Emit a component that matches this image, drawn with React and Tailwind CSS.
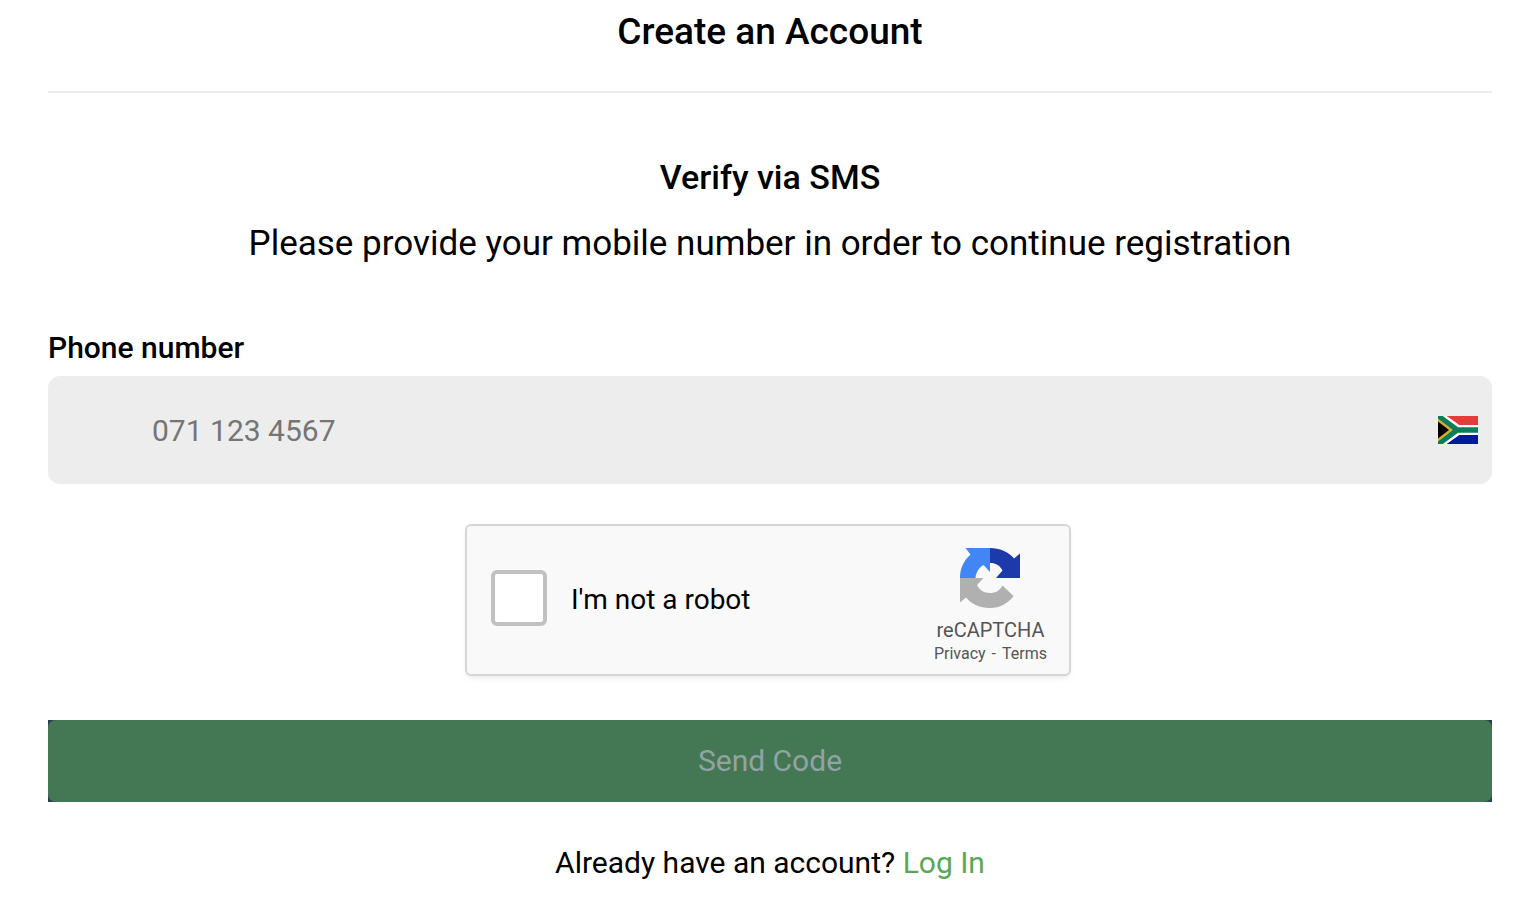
import React, { useState } from "react";

const SouthAfricaFlag = () => (
  <svg viewBox="0 0 40 28" className="h-7 w-10" role="img" aria-label="South Africa">
    <path fill="#fff" d="M0 0h40v28H0z" />
    <path fill="#e23d38" d="M8 0h32v9.3H21.5z" />
    <path fill="#001b9a" d="M8 28h32v-9.3H21.5z" />
    <path fill="#fff" d="M2 0h6.6l12.4 9H40v10H21L8.6 28H2z" />
    <path fill="#0a7d5b" d="M0 0h4.8l15.2 11.3H40v5.4H20L4.8 28H0z" />
    <path fill="#d9ae35" d="M0 2.5 15 14 0 25.5z" />
    <path fill="#000" d="M0 5.5 11 14 0 22.5z" />
  </svg>
);

const RecaptchaLogo = () => (
  <svg viewBox="0 0 60 60" className="size-15" aria-hidden="true">
    <path
      fill="#1c3aa9"
      d="M30 0C39.5 0 48.5 3.6 54 10.5L60 5.5V30H36L42.5 22.5C41.5 20.5 40 18.5 38 17.2C35.5 15.5 33 15 30 15Z"
    />
    <path
      fill="#4285f4"
      d="M30 0V24L23.5 17C19 19.5 16 24 15.5 30H0C0 20.5 3.5 13 10.5 6.5L5.5 0Z"
    />
    <path
      fill="#b0b0b0"
      d="M0 30H23.5L17 37C19.5 42 24 45 30 45C35.5 45 40 42.5 42.5 37.5L53.5 48C48 55.5 40 60 30 60C20 60 11.5 56 6 49.5L0 54.5Z"
    />
  </svg>
);

const App = () => {
  const [phone, setPhone] = useState("");
  const [isHuman, setIsHuman] = useState(false);

  return (
    <main className="bg-white pt-2 pb-4 pl-12 pr-11 font-[Roboto,sans-serif] text-black">
      {/* Header */}
      <header className="border-b-2 border-[#ececec] pb-[35px] text-center">
        <h1 className="text-[37px] font-medium leading-12">Create an Account</h1>
      </header>

      <section className="pt-15 text-center">
        <h2 className="text-[34px] font-medium leading-12">Verify via SMS</h2>
        <p className="mt-[19px] text-[35px] leading-12">
          Please provide your mobile number in order to continue registration
        </p>
      </section>

      <form className="pt-15" onSubmit={(e) => e.preventDefault()}>
        {/* Phone */}
        <label htmlFor="phone" className="block text-[30px] font-medium leading-10">
          Phone number
        </label>
        <div className="mt-2 flex h-27 items-center rounded-xl bg-[#ededed] pr-3.5">
          <input
            id="phone"
            type="tel"
            value={phone}
            onChange={(e) => setPhone(e.target.value)}
            placeholder="071 123 4567"
            className="h-full min-w-0 flex-1 bg-transparent pl-26 text-[30px] outline-none placeholder:text-[#757575]"
          />
          <SouthAfricaFlag />
        </div>

        {/* Captcha */}
        <div className="mt-10 flex justify-center pr-1">
          <div className="flex w-full max-w-[606px] items-center justify-between rounded-md border-2 border-[#d6d6d6] bg-[#f9f9f9] py-2.5 pr-[22px] pl-6 shadow-md shadow-black/5">
            <label htmlFor="robot" className="flex items-center gap-6 text-[28px]">
              <input
                id="robot"
                type="checkbox"
                checked={isHuman}
                onChange={(e) => setIsHuman(e.target.checked)}
                className="mb-1 size-14 appearance-none rounded-md border-4 border-[#c1c1c1] bg-white checked:bg-[#4285f4]"
              />
              I'm not a robot
            </label>
            <div className="flex flex-col items-center pt-3 text-[#555]">
              <RecaptchaLogo />
              <span className="mt-2 text-xl leading-7">reCAPTCHA</span>
              <div className="flex gap-1.5 text-base leading-5">
                <a href="#privacy">Privacy</a>
                <span>-</span>
                <a href="#terms">Terms</a>
              </div>
            </div>
          </div>
        </div>

        <div className="mt-11 bg-[#2b3f52]">
          <button
            type="submit"
            disabled
            className="block w-full rounded-lg bg-[#447754] py-5 text-[30px] leading-[42px] text-[#92a3a6]"
          >
            Send Code
          </button>
        </div>
      </form>

      <p className="mt-10 text-center text-[30px] leading-[42px]">
        Already have an account?{" "}
        <a href="#login" className="text-[#5aa855]">
          Log In
        </a>
      </p>
    </main>
  );
};

export default App;
